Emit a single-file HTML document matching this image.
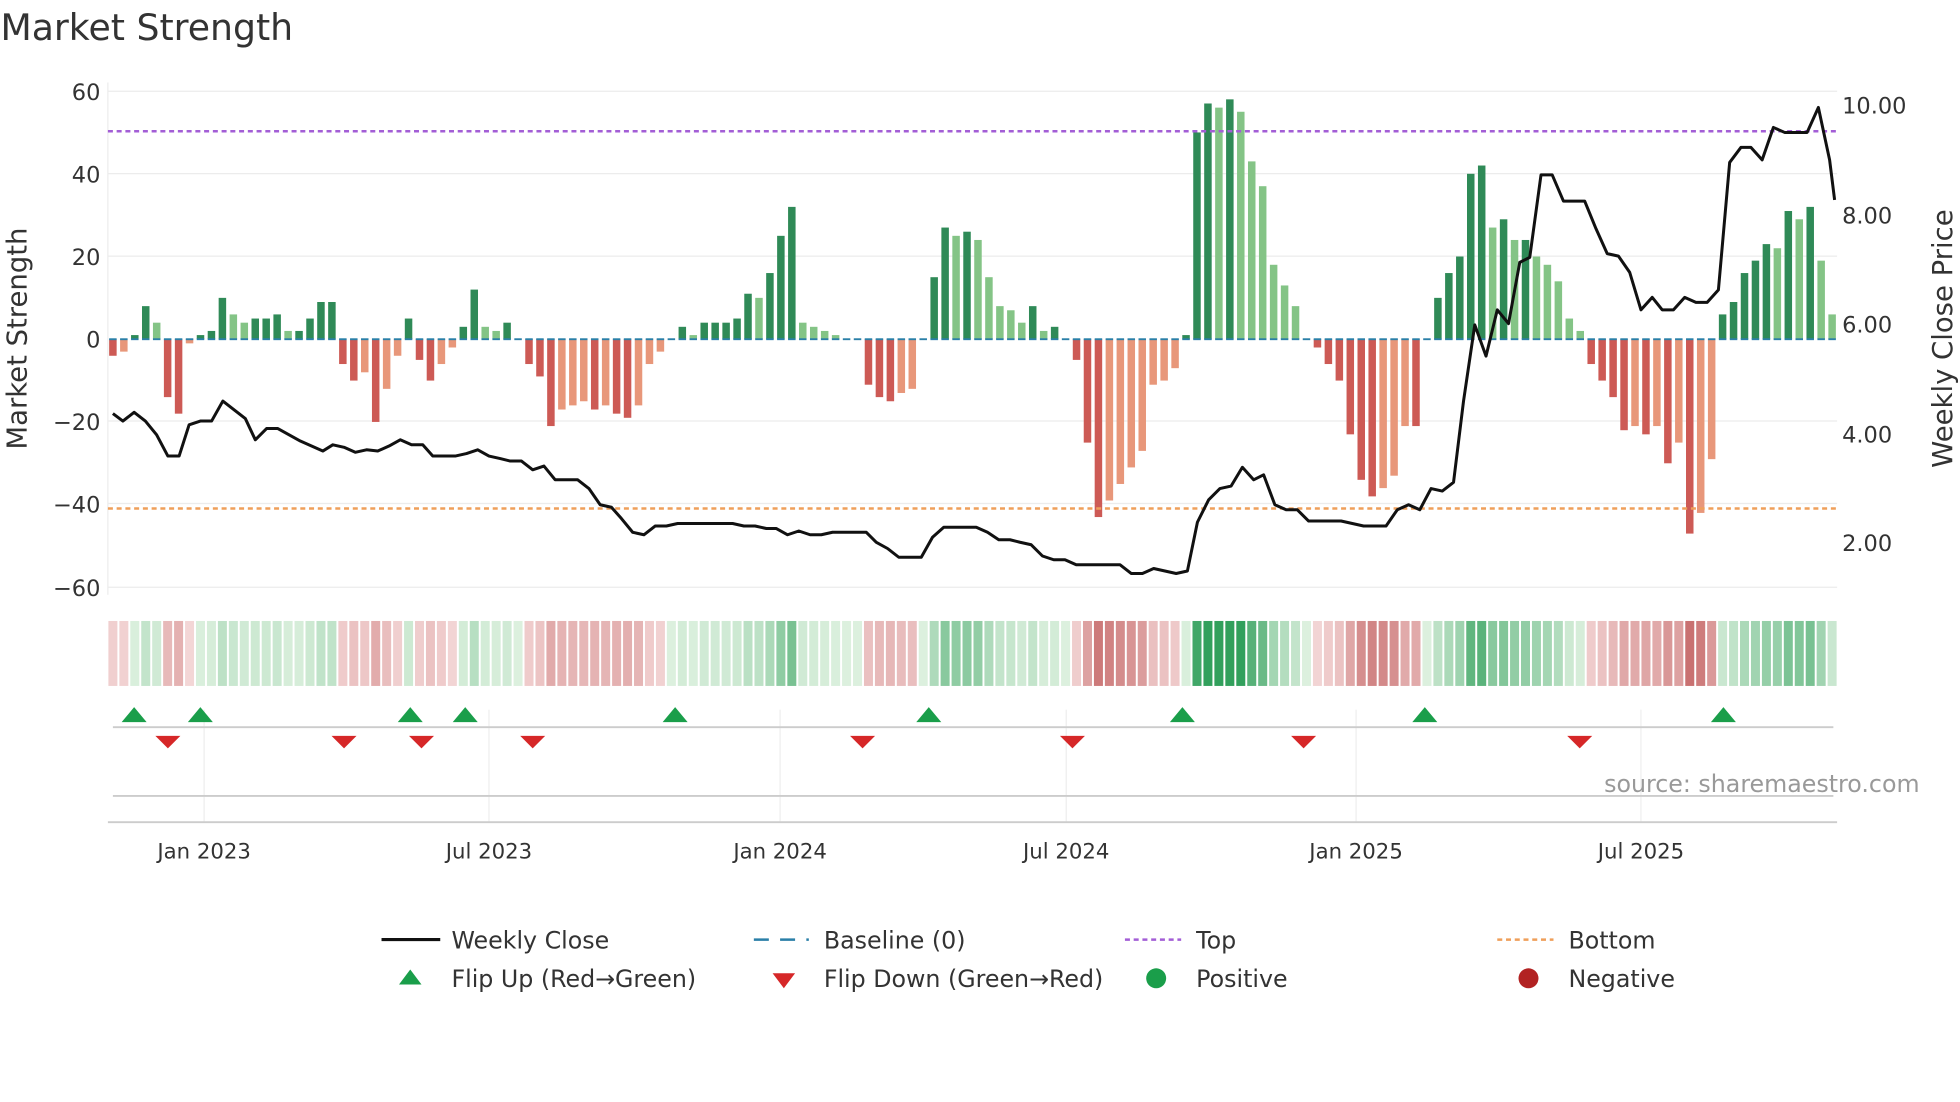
<!DOCTYPE html>
<html><head><meta charset="utf-8"><style>
html,body{margin:0;padding:0;background:#fff;width:1960px;height:1102px;overflow:hidden}
svg{display:block;font-family:"DejaVu Sans","Liberation Sans",sans-serif}
</style></head><body>
<svg id="s" width="1960" height="1102" viewBox="0 0 1568 882" xmlns="http://www.w3.org/2000/svg">
<text x="0" y="32" font-size="29" fill="#333">Market Strength</text>
<g stroke="#ececec" stroke-width="1">
<line x1="86" y1="73" x2="1470" y2="73"/><line x1="86" y1="139" x2="1470" y2="139"/><line x1="86" y1="205" x2="1470" y2="205"/><line x1="86" y1="337" x2="1470" y2="337"/><line x1="86" y1="403" x2="1470" y2="403"/><line x1="86" y1="470" x2="1470" y2="470"/>
<line x1="86" y1="66" x2="86" y2="476"/>
</g>
<g font-size="18" fill="#333" text-anchor="end">
<text x="80" y="80">60</text><text x="80" y="146">40</text><text x="80" y="212">20</text><text x="80" y="278">0</text><text x="80" y="344">−20</text><text x="80" y="410">−40</text><text x="80" y="477">−60</text>
</g>
<g font-size="18" fill="#333">
<text x="1474" y="91">10.00</text><text x="1474" y="179">8.00</text><text x="1474" y="266">6.00</text><text x="1474" y="354">4.00</text><text x="1474" y="441">2.00</text>
</g>
<text transform="translate(21,271) rotate(-90)" font-size="22" fill="#333" text-anchor="middle">Market Strength</text>
<text transform="translate(1562,271) rotate(-90)" font-size="22" fill="#333" text-anchor="middle">Weekly Close Price</text>
<g id="bars"></g>
<line x1="86" y1="105" x2="1470" y2="105" stroke="#a35ed6" stroke-width="2" stroke-dasharray="4,3"/>
<line x1="86" y1="407" x2="1470" y2="407" stroke="#ef9f5a" stroke-width="2" stroke-dasharray="4,3"/>
<polyline id="price" fill="none" stroke="#111" stroke-width="2.4" stroke-linejoin="round"/>
<g id="heat"></g>
<g stroke="#eee"><line x1="163" y1="568" x2="163" y2="658"/><line x1="391" y1="568" x2="391" y2="658"/><line x1="624" y1="568" x2="624" y2="658"/><line x1="853" y1="568" x2="853" y2="658"/><line x1="1085" y1="568" x2="1085" y2="658"/><line x1="1313" y1="568" x2="1313" y2="658"/></g>
<line x1="90" y1="582" x2="1467" y2="582" stroke="#ccc" stroke-width="1.5"/>
<line x1="90" y1="637" x2="1467" y2="637" stroke="#ccc" stroke-width="1.5"/>
<line x1="86" y1="658" x2="1470" y2="658" stroke="#ccc" stroke-width="1.5"/>
<g id="flips"></g>
<text x="1536" y="634" font-size="19" fill="#999" text-anchor="end">source: sharemaestro.com</text>
<g font-size="17" fill="#333" text-anchor="middle">
<text x="163" y="687">Jan 2023</text><text x="391" y="687">Jul 2023</text><text x="624" y="687">Jan 2024</text><text x="853" y="687">Jul 2024</text><text x="1085" y="687">Jan 2025</text><text x="1313" y="687">Jul 2025</text>
</g>
<g font-size="19" fill="#333">
<line x1="305" y1="752" x2="352" y2="752" stroke="#111" stroke-width="2.5"/><text x="361" y="759">Weekly Close</text>
<line x1="603" y1="752" x2="647" y2="752" stroke="#2a7fa8" stroke-width="2" stroke-dasharray="12,9"/><text x="659" y="759">Baseline (0)</text>
<line x1="900" y1="752" x2="945" y2="752" stroke="#a35ed6" stroke-width="2" stroke-dasharray="4,3"/><text x="957" y="759">Top</text>
<line x1="1198" y1="752" x2="1243" y2="752" stroke="#ef9f5a" stroke-width="2" stroke-dasharray="4,3"/><text x="1255" y="759">Bottom</text>
<polygon points="319,788 337,788 328,776" fill="#1a9e4a"/><text x="361" y="790">Flip Up (Red→Green)</text>
<polygon points="618,779 636,779 627,791" fill="#d62728"/><text x="659" y="790">Flip Down (Green→Red)</text>
<circle cx="925" cy="783" r="8" fill="#1a9e4a"/><text x="957" y="790">Positive</text>
<circle cx="1223" cy="783" r="8" fill="#b22222"/><text x="1255" y="790">Negative</text>
</g>
</svg>
<script>
var v=[-4,-3,1,8,4,-14,-18,-1,1,2,10,6,4,5,5,6,2,2,5,9,9,-6,-10,-8,-20,-12,-4,5,-5,-10,-6,-2,3,12,3,2,4,0,-6,-9,-21,-17,-16,-15,-17,-16,-18,-19,-16,-6,-3,0,3,1,4,4,4,5,11,10,16,25,32,4,3,2,1,0,0,-11,-14,-15,-13,-12,0,15,27,25,26,24,15,8,7,4,8,2,3,0,-5,-25,-43,-39,-35,-31,-27,-11,-10,-7,1,50,57,56,58,55,43,37,18,13,8,0,-2,-6,-10,-23,-34,-38,-36,-33,-21,-21,0,10,16,20,40,42,27,29,24,24,20,18,14,5,2,-6,-10,-14,-22,-21,-23,-21,-30,-25,-47,-42,-29,6,9,16,19,23,22,31,29,32,19,6];
var NS="http://www.w3.org/2000/svg",n=v.length,x0=90,x1=1466,dx=(x1-x0)/(n-1);
function el(t,a,p){var e=document.createElementNS(NS,t);for(var k in a)e.setAttribute(k,a[k]);p.appendChild(e);return e}
var B=document.getElementById('bars'),H=document.getElementById('heat');
for(var i=0;i<n;i++){var x=x0+i*dx,val=v[i],pr=i?v[i-1]:0,c;
 if(val>=0)c=(val>=pr)?'#2f8a57':'#84c486';else c=(val<=pr)?'#cd5a55':'#e8977a';
 var y0=271.5,h=Math.abs(val)*3.31;
 if(h>0)el('rect',{x:x-3,y:val>0?y0-h:y0,width:6,height:h,fill:c},B);
 el('line',{x1:x-3,x2:x+3,y1:271.5,y2:271.5,stroke:'#2a7fa8','stroke-width':1.5},B);
 var a=Math.min(Math.abs(val)/55,1),col;
 if(val>=0){col='rgb('+Math.round(220-170*a)+','+Math.round(240-80*a)+','+Math.round(222-130*a)+')';}
 else{col='rgb('+Math.round(244-50*a)+','+Math.round(216-120*a)+','+Math.round(216-120*a)+')';}
 el('rect',{x:x-3.6,y:497,width:7.2,height:52,fill:col},H);
}
var pts=[[90,331],[98,337],[107,330],[116,337],[125,348],[134,365],[143,365],[151,340],[160,337],[169,337],[178,321],[187,328],[196,335],[204,352],[213,343],[222,343],[231,348],[240,353],[249,357],[258,361],[266,356],[275,358],[284,362],[293,360],[302,361],[311,357],[320,352],[329,356],[338,356],[346,365],[355,365],[364,365],[373,363],[382,360],[391,365],[400,367],[408,369],[417,369],[426,376],[435,373],[444,384],[453,384],[462,384],[471,391],[480,404],[489,406],[497,415],[506,426],[515,428],[524,421],[533,421],[542,419],[550,419],[559,419],[568,419],[577,419],[586,419],[595,421],[604,421],[613,423],[621,423],[630,428],[639,425],[648,428],[657,428],[666,426],[675,426],[684,426],[693,426],[701,434],[710,439],[719,446],[728,446],[737,446],[746,430],[755,422],[763,422],[772,422],[781,422],[790,426],[799,432],[808,432],[816,434],[825,436],[834,445],[843,448],[852,448],[861,452],[870,452],[879,452],[887,452],[896,452],[905,459],[914,459],[923,455],[932,457],[941,459],[950,457],[958,418],[967,400],[976,391],[985,389],[994,374],[1003,384],[1011,380],[1020,404],[1029,408],[1038,408],[1047,417],[1056,417],[1064,417],[1073,417],[1082,419],[1091,421],[1100,421],[1109,421],[1118,408],[1127,404],[1136,408],[1145,391],[1154,393],[1163,386],[1171,321],[1180,260],[1189,285],[1198,248],[1207,259],[1216,210],[1224,206],[1233,140],[1242,140],[1251,161],[1260,161],[1268,161],[1277,183],[1286,203],[1295,205],[1304,218],[1313,248],[1322,238],[1330,248],[1339,248],[1348,238],[1357,242],[1366,242],[1375,232],[1384,130],[1393,118],[1401,118],[1410,128],[1419,102],[1428,106],[1437,106],[1446,106],[1455,86],[1464,128],[1468,160]];
document.getElementById('price').setAttribute('points',pts.map(function(p){return p.join(',')}).join(' '));
var F=document.getElementById('flips');
[107,160,328,372,540,743,946,1140,1379].forEach(function(x){el('polygon',{points:(x-10)+',578 '+(x+10)+',578 '+x+',566',fill:'#1a9e4a'},F)});
[134,275,337,426,690,858,1043,1264].forEach(function(x){el('polygon',{points:(x-10)+',589 '+(x+10)+',589 '+x+',599',fill:'#d62728'},F)});
</script>
</body></html>
